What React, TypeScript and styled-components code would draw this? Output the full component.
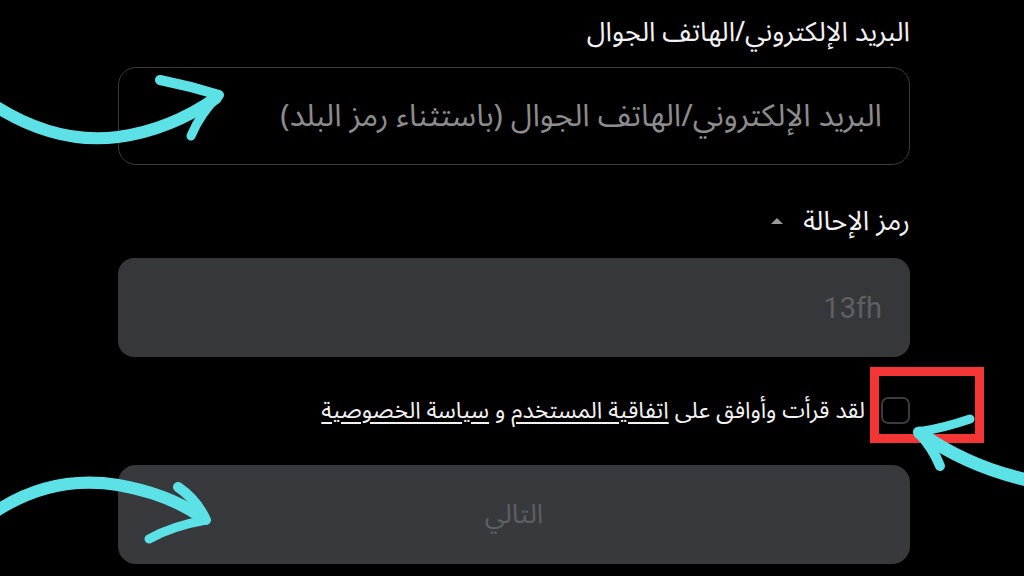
import React from 'react';
import styled, { createGlobalStyle } from 'styled-components';

const Colors = {
  bg: '#000000',
  text: '#f2f2f2',
  placeholder: '#8c8c8c',
  border: '#3b3b3d',
  field: '#36373a',
  fieldText: '#5d5f63',
  accent: '#5ce1e6',
  red: '#f43535',
};

const GlobalStyle = createGlobalStyle`
  html, body {
    margin: 0;
    padding: 0;
    background: ${Colors.bg};
  }
  body {
    width: 1024px;
    height: 576px;
    overflow: hidden;
    font-family: "Noto Sans Arabic", "DejaVu Sans", "Noto Sans", sans-serif;
  }
`;

export default function App() {
  return (
    <>
      <GlobalStyle />
      <Page>
        <Form dir="rtl">
          <Label>البريد الإلكتروني/الهاتف الجوال</Label>
          <OutlinedInput>
            <Placeholder>البريد الإلكتروني/الهاتف الجوال (باستثناء رمز البلد)</Placeholder>
          </OutlinedInput>

          <LabelRow>
            <Label>رمز الإحالة</Label>
            <Caret />
          </LabelRow>
          <FilledInput>
            <FieldValue dir="ltr">13fh</FieldValue>
          </FilledInput>

          <AgreeRow>
            <Checkbox />
            <AgreeText>
              لقد قرأت وأوافق على <Link>اتفاقية المستخدم</Link> و <Link>سياسة الخصوصية</Link>
            </AgreeText>
          </AgreeRow>

          <NextButton>التالي</NextButton>
        </Form>

        <Highlight />
        <Arrows />
      </Page>
    </>
  );
}

function Arrows() {
  return (
    <Overlay viewBox="0 0 1024 576" width="1024" height="576">
      <g fill="none" stroke={Colors.accent} strokeLinecap="round" strokeLinejoin="round">
        {/* top-left arrow */}
        <path d="M -8 104 Q 55 145 118 137 Q 170 130 216 98" strokeWidth="12" />
        <path d="M 160 80 Q 190 86 219 95" strokeWidth="10" />
        <path d="M 219 95 Q 200 114 191 136" strokeWidth="9" />
        {/* bottom-left arrow */}
        <path d="M -8 514 Q 50 474 118 485 Q 170 494 204 519" strokeWidth="12" />
        <path d="M 178 487 Q 197 500 206 520" strokeWidth="10" />
        <path d="M 206 520 Q 172 526 149 539" strokeWidth="9" />
        {/* right arrow */}
        <path d="M 1032 481 Q 970 468 920 433" strokeWidth="13" />
        <path d="M 970 419 Q 944 428 918 432" strokeWidth="9" />
        <path d="M 918 432 Q 933 448 940 466" strokeWidth="10" />
      </g>
    </Overlay>
  );
}

const Page = styled.div`
  position: relative;
  width: 1024px;
  height: 576px;
  padding: 16px 0 0 118px;
  box-sizing: border-box;
`;

const Form = styled.div`
  width: 792px;
  display: flex;
  flex-direction: column;
  align-items: stretch;
`;

const Label = styled.div`
  font-size: 27px;
  line-height: 34px;
  color: ${Colors.text};
`;

const LabelRow = styled.div`
  display: flex;
  align-items: center;
  gap: 20px;
  margin-top: 40px;
`;

const Caret = styled.span`
  width: 0;
  height: 0;
  border-left: 6px solid transparent;
  border-right: 6px solid transparent;
  border-bottom: 6px solid #9a9a9a;
  margin-top: -2px;
`;

const OutlinedInput = styled.div`
  height: 98px;
  margin-top: 17px;
  border: 1.5px solid ${Colors.border};
  border-radius: 18px;
  box-sizing: border-box;
  display: flex;
  align-items: center;
  padding: 0 27px;
`;

const Placeholder = styled.span`
  font-size: 31px;
  color: ${Colors.placeholder};
`;

const FilledInput = styled.div`
  height: 99px;
  margin-top: 19px;
  border-radius: 16px;
  background: ${Colors.field};
  display: flex;
  align-items: center;
  padding: 0 28px;
`;

const FieldValue = styled.span`
  font-family: Roboto, "Noto Sans", sans-serif;
  font-size: 29px;
  color: ${Colors.fieldText};
`;

const AgreeRow = styled.div`
  display: flex;
  align-items: center;
  gap: 16px;
  margin-top: 39px;
  height: 28px;
`;

const Checkbox = styled.span`
  width: 29px;
  height: 27px;
  box-sizing: border-box;
  border: 2px solid ${Colors.border};
  border-radius: 7px;
  flex-shrink: 0;
`;

const AgreeText = styled.span`
  font-size: 23px;
  color: ${Colors.text};
  white-space: nowrap;
`;

const Link = styled.span`
  text-decoration: underline;
  text-underline-offset: 4px;
`;

const NextButton = styled.div`
  height: 99px;
  margin-top: 41px;
  border-radius: 18px;
  background: #38393c;
  display: flex;
  align-items: center;
  justify-content: center;
  font-size: 27px;
  color: ${Colors.fieldText};
`;

const Highlight = styled.div`
  position: absolute;
  left: 870px;
  top: 367px;
  width: 114px;
  height: 76px;
  box-sizing: border-box;
  border: 9px solid ${Colors.red};
  pointer-events: none;
`;

const Overlay = styled.svg`
  position: absolute;
  left: 0;
  top: 0;
  pointer-events: none;
`;
